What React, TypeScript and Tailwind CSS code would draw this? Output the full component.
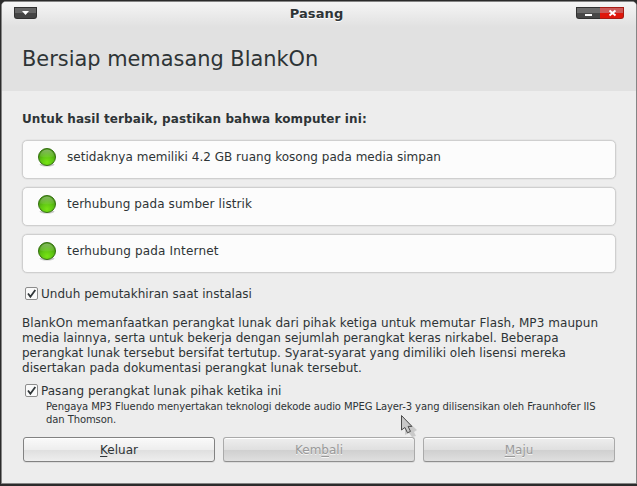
import React from "react";

function StatusDot() {
  return (
    <svg className="mt-[6px] h-5 w-5 shrink-0" viewBox="0 0 20 20">
      <defs>
        <radialGradient id="ball" cx="0.5" cy="0.8" r="0.7">
          <stop offset="0" stopColor="#78e414" />
          <stop offset="0.5" stopColor="#5fc612" />
          <stop offset="1" stopColor="#43920d" />
        </radialGradient>
        <linearGradient id="gloss" x1="0" y1="0" x2="0" y2="1">
          <stop offset="0" stopColor="#fff" stopOpacity="0.35" />
          <stop offset="1" stopColor="#fff" stopOpacity="0.05" />
        </linearGradient>
      </defs>
      <ellipse cx="10" cy="17.6" rx="7.5" ry="2" fill="#000" opacity="0.2" />
      <circle cx="10" cy="10" r="8.5" fill="url(#ball)" stroke="#356f12" />
      <path d="M3 9.5a7 7 0 0 1 14 0q-7 2.2-14 0z" fill="url(#gloss)" />
    </svg>
  );
}

function Requirement({ text, spacing }: { text: string; spacing: string }) {
  return (
    <div className="flex h-[39px] rounded-[5px] border border-[#cfcfcf] bg-[#fcfcfc] pl-[14px] shadow-[0_0_0_0.5px_#dedede]">
      <StatusDot />
      <span className={"ml-[10px] mt-[9px] leading-[15px] " + spacing}>{text}</span>
    </div>
  );
}

function Check({ label, spacing }: { label: string; spacing: string }) {
  return (
    <label className="flex h-[15px] items-center pl-[3px]">
      <svg className="h-[13px] w-[13px] shrink-0" viewBox="0 0 13 13">
        <rect x="0.5" y="0.5" width="12" height="12" rx="1.5" fill="#fafafa" stroke="#8c8c8c" />
        <path d="M3 6.5 5.4 9.8 10.3 3" fill="none" stroke="#303638" strokeWidth="1.8" />
      </svg>
      <span className={"ml-[3px] pt-[2px] leading-[15px] " + spacing}>{label}</span>
    </label>
  );
}

function Button({ before, letter, after, disabled }: { before?: string; letter: string; after: string; disabled?: boolean }) {
  return (
    <button
      disabled={disabled}
      className={
        "flex h-[25px] w-48 items-center justify-center rounded-[3px] border leading-[15px] shadow-[inset_0_1px_0_#fff,0_1px_0_#dcdcdc] " +
        (disabled
          ? "border-[#aaa] border-b-[#8f8f8f] bg-[linear-gradient(#eeeeee,#e0e0e0_50%,#cfcfcf_51%,#dfdfdf)] text-[#999] [text-shadow:0_1px_0_#f5f5f5]"
          : "border-[#828282] bg-[linear-gradient(#fafafa,#eeeeee_50%,#dfdfdf_51%,#eeeeee)] text-[#2e3436]")
      }
    >
      <span className="mt-px">
        {before}
        <span className="underline decoration-1 underline-offset-2">{letter}</span>
        {after}
      </span>
    </button>
  );
}

export default function App() {
  return (
    <div className="relative h-[486px] w-[637px] overflow-hidden bg-[#2b2b2b] pl-px pt-px font-['DejaVu_Sans',sans-serif] text-[12px] text-[#2e3436]">
      <div className="h-[483px] w-[636px] overflow-hidden whitespace-nowrap rounded-t-[5px] border border-[#858585] bg-[#ededed]">
        <header className="h-[89px] bg-[#e1e1e1]">
          <div className="flex h-[25px] items-start justify-between bg-[linear-gradient(#f5f5f5,#e1e1e1)] pl-3 pr-3">
            <svg className="mt-[5px] h-[13px] w-[23px]" viewBox="0 0 23 13">
              <path d="M0 0H23V9q0 3-3 3H3Q0 12 0 9z" fill="#303030" />
              <path d="M1 1H22V6H1z" fill="#656565" />
              <path d="M1 6H22V9q0 2-2 2H3Q1 11 1 9z" fill="#444" />
              <path d="M8 4h7l-3.5 4z" fill="#fff" />
            </svg>
            <div className="ml-[20px] mt-1 text-[13px] font-bold leading-[16px] tracking-[0.1px] [text-shadow:0_1px_0_#fff]">Pasang</div>
            <svg className="mt-[5px] h-[13px] w-12" viewBox="0 0 48 13">
              <path d="M0 0H24V12H3Q0 12 0 9z" fill="#303030" />
              <path d="M1 1H24V6H1z" fill="#6c6c6c" />
              <path d="M1 6H24V11H3Q1 11 1 9z" fill="#484848" />
              <path d="M24 0H48V9q0 3-3 3H24z" fill="#a51b13" />
              <path d="M24 1H47V6H24z" fill="#cc5a59" />
              <path d="M24 6H47V9q0 2-2 2H24z" fill="#df160b" />
              <path d="M9 7h7v2H9z" fill="#fff" />
              <path d="m33.5 3.5 6 5m0-5-6 5" stroke="#fff" strokeWidth="2" />
            </svg>
          </div>
          <h1 className="ml-5 mt-[19px] text-[20.9px] leading-[26px]">Bersiap memasang BlankOn</h1>
        </header>
        <main className="ml-5 w-[594px] pt-[21px]">
          <h2 className="text-[12px] font-bold leading-[15px] tracking-[0.09px]">Untuk hasil terbaik, pastikan bahwa komputer ini:</h2>
          <div className="mt-[13px] flex flex-col gap-2">
            <Requirement text="setidaknya memiliki 4.2 GB ruang kosong pada media simpan" spacing="tracking-[0.02px]" />
            <Requirement text="terhubung pada sumber listrik" spacing="tracking-[0.1px]" />
            <Requirement text="terhubung pada Internet" spacing="tracking-[0.17px]" />
          </div>
          <div className="mt-[13px]">
            <Check label="Unduh pemutakhiran saat instalasi" spacing="tracking-[0.03px]" />
          </div>
          <p className="mt-[15px] leading-[15px]">
            <span className="block tracking-[0.065px]">BlankOn memanfaatkan perangkat lunak dari pihak ketiga untuk memutar Flash, MP3 maupun</span>
            <span className="block tracking-[0.005px]">media lainnya, serta untuk bekerja dengan sejumlah perangkat keras nirkabel. Beberapa</span>
            <span className="block">perangkat lunak tersebut bersifat tertutup. Syarat-syarat yang dimiliki oleh lisensi mereka</span>
            <span className="block tracking-[0.03px]">disertakan pada dokumentasi perangkat lunak tersebut.</span>
          </p>
          <div className="mt-[7px]">
            <Check label="Pasang perangkat lunak pihak ketika ini" spacing="tracking-[0.03px]" />
          </div>
          <p className="ml-6 mt-[2px] text-[10px] leading-[13px] tracking-[-0.09px]">
            <span className="block">Pengaya MP3 Fluendo menyertakan teknologi dekode audio MPEG Layer-3 yang dilisensikan oleh Fraunhofer IIS</span>
            <span className="block">dan Thomson.</span>
          </p>
          <div className="ml-px mt-[11px] flex gap-2">
            <Button letter="K" after="eluar" />
            <Button before="Kem" letter="b" after="ali" disabled />
            <Button letter="M" after="aju" disabled />
          </div>
        </main>
      </div>
      <svg className="absolute left-[400px] top-[414px] h-[24px] w-[20px]" viewBox="0 0 20 24">
        <path d="M5 5V21l4-2 3 4 4-1-2-4 3-2z" fill="#000" opacity="0.15" />
        <path d="M1.5 1.5V16l3.4-2.5 2.6 5.3 3-1.4-2.4-5h3.8z" fill="#c8c8c8" stroke="#4a4a4a" />
      </svg>
    </div>
  );
}
